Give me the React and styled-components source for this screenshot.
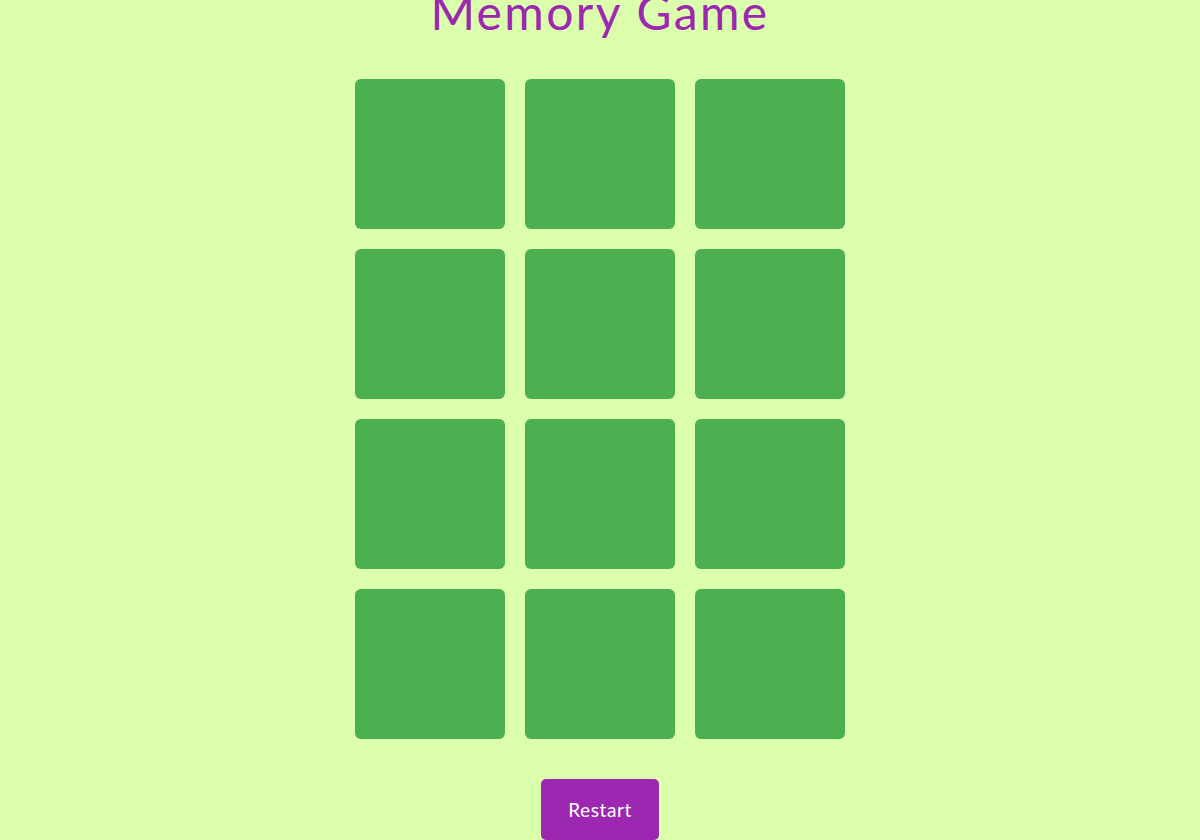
import styled, { createGlobalStyle } from "styled-components";

const GlobalStyle = createGlobalStyle`
  body {
    margin: 0;
    background-color: #dcffae;
    font-family: "Lato", "Open Sans", sans-serif;
  }
`;

const Page = styled.div`
  display: flex;
  flex-direction: column;
  align-items: center;
  overflow: hidden;
  height: 100vh;
`;

const Title = styled.h1`
  margin: -12px 0 0 0;
  font-size: 48px;
  line-height: 48px;
  font-weight: 400;
  color: #9c27b0;
  letter-spacing: 2.4px;
`;

const Board = styled.div`
  display: grid;
  grid-template-columns: repeat(3, 150px);
  gap: 20px;
  margin-top: 43px;
`;

const Card = styled.div`
  width: 150px;
  height: 150px;
  background-color: #4caf50;
  border-radius: 6px;
  cursor: pointer;
`;

const Button = styled.button`
  margin-top: 40px;
  padding: 17px 27px;
  border: none;
  border-radius: 5px;
  background-color: #9c27b0;
  color: white;
  font-family: "Lato", sans-serif;
  font-size: 19px;
  line-height: 27px;
  letter-spacing: 0.6px;
  cursor: pointer;
`;

const App = () => {
  const cards = Array.from({ length: 12 }, (_, i) => i);
  return (
    <Page>
      <GlobalStyle />
      <Title>Memory Game</Title>
      <Board>
        {cards.map((c) => (
          <Card key={c} />
        ))}
      </Board>
      <Button>Restart</Button>
    </Page>
  );
};

export default App;
